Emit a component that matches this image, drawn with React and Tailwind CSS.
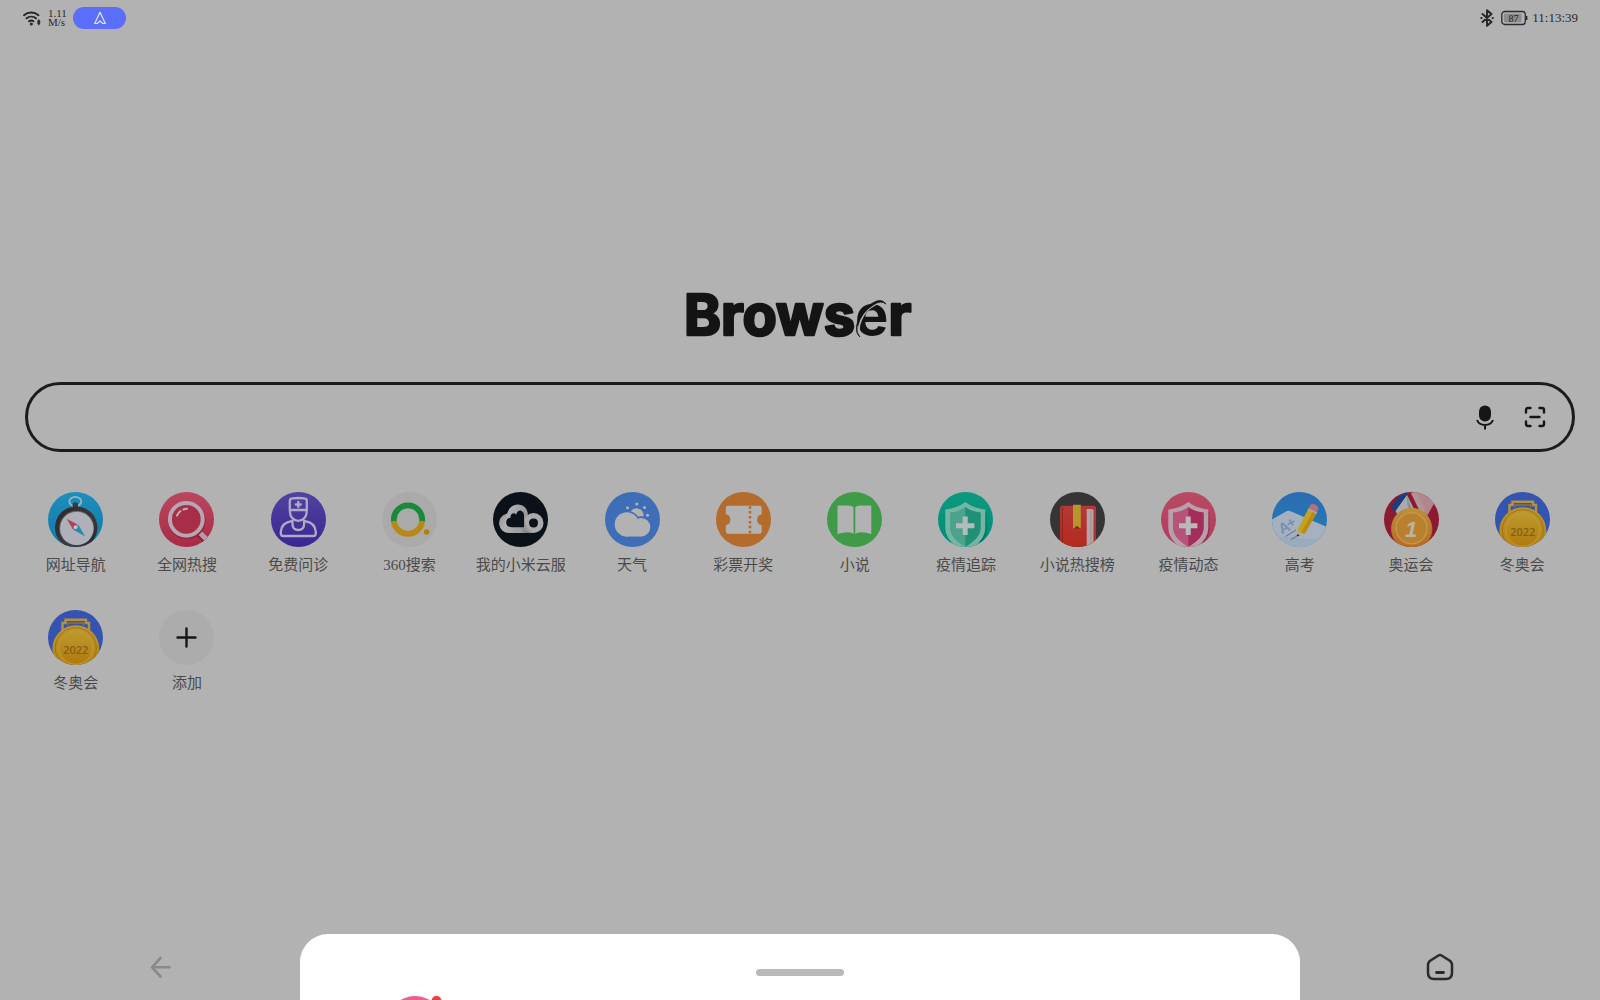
import { useState } from 'react';

const CompassIcon = () => (
  <>
    <defs>
      <linearGradient id="compassBg" x1="0" y1="0" x2="0" y2="1">
        <stop offset="0" stopColor="#1c8fbd" />
        <stop offset="1" stopColor="#1278a8" />
      </linearGradient>
      <linearGradient id="compassRim" x1="0" y1="0" x2="1" y2="1">
        <stop offset="0" stopColor="#2b2829" />
        <stop offset="0.6" stopColor="#3d393a" />
        <stop offset="1" stopColor="#242223" />
      </linearGradient>
    </defs>
    <rect width="55" height="55" fill="url(#compassBg)" />
    <ellipse cx="27.3" cy="9.5" rx="6" ry="4.6" fill="none" stroke="#92b4c4" strokeWidth="1.8" />
    <rect x="24.6" y="10.5" width="5.4" height="5" rx="1.5" fill="#3b3837" />
    <circle cx="28.2" cy="35.6" r="21.2" fill="url(#compassRim)" />
    <circle cx="28.6" cy="36.2" r="17.4" fill="#626063" />
    <circle cx="28.8" cy="36.4" r="16.7" fill="#aeb1ba" />
    <path d="M18.7 26.7 29.6 32.6 25 37.6Z" fill="#b63f55" />
    <path d="M37.2 44.5 30.4 32.8 25.2 37.8Z" fill="#2b8bae" />
    <circle cx="27.6" cy="35.2" r="1.9" fill="#c3c4ca" />
  </>
);

const SearchIcon = () => (
  <>
    <defs>
      <linearGradient id="searchBg" x1="0" y1="0" x2="0" y2="1">
        <stop offset="0" stopColor="#b9475f" />
        <stop offset="1" stopColor="#ab2a45" />
      </linearGradient>
    </defs>
    <rect width="55" height="55" fill="url(#searchBg)" />
    <path d="m38.5 40.5 9 8.5" stroke="#8f243b" strokeWidth="7" />
    <path d="m39.5 39.5 9 8.8" stroke="#b59da9" strokeWidth="5" />
    <circle cx="27.8" cy="28.4" r="17" fill="none" stroke="#94263d" strokeWidth="3.6" />
    <circle cx="27.3" cy="27.3" r="16.4" fill="#a82e47" stroke="#b7a5b2" strokeWidth="4" />
    <path d="M18 23.5q1.500-3 3.500-4.500M24.500 17.500q2-.8 3.500-.7" fill="none" stroke="#bdb1b9" strokeWidth="2" strokeLinecap="round" />
  </>
);

const DoctorIcon = () => (
  <>
    <defs>
      <linearGradient id="doctorBg" x1="0" y1="0" x2="0" y2="1">
        <stop offset="0" stopColor="#5143a0" />
        <stop offset="1" stopColor="#3c2593" />
      </linearGradient>
    </defs>
    <rect width="55" height="55" fill="url(#doctorBg)" />
    <g fill="none" stroke="#b0abc4" strokeWidth="2.300" strokeLinejoin="round" strokeLinecap="round">
      <path d="M18.800 18V9q0-2.400 2.500-2.600 6-.8 12 0 2.500.2 2.500 2.600v9Z" />
      <path d="M19 18v2.500a8.300 8.300 0 0 0 16.600 0V18" />
      <path d="M20.500 29.200C14 30.300 10 33.500 9.800 40v1.500q0 2.500 2.500 2.500h30q2.500 0 2.500-2.500V40c-.2-6.500-4.200-9.700-10.700-10.800" />
      <path d="M21.500 29v3q0 6 5.800 6t5.800-6v-3" />
      <path d="M27.300 10v5M24.800 12.500h5" />
    </g>
  </>
);

const So360Icon = () => (
  <>
    <rect width="55" height="55" fill="#aaaaab" />
    <path d="M11.900 29.300a14.200 14.200 0 1 1 28.200 0" fill="none" stroke="#1c883b" strokeWidth="5.800" />
    <path d="M40.100 29.300a14.200 14.200 0 0 1-28.200 0" fill="none" stroke="#b98917" strokeWidth="5.800" />
    <circle cx="44.600" cy="40" r="2.800" fill="#b27d14" />
  </>
);

const MiCloudIcon = () => (
  <>
    <defs>
      <linearGradient id="miCloud" x1="0" y1="0" x2="1" y2="0.3">
        <stop offset="0" stopColor="#8d8d90" />
        <stop offset="0.4" stopColor="#b0b0b2" />
        <stop offset="1" stopColor="#97979a" />
      </linearGradient>
      <linearGradient id="miFold" x1="0" y1="0" x2="1" y2="0">
        <stop offset="0" stopColor="#a4a4a6" />
        <stop offset="1" stopColor="#58585c" />
      </linearGradient>
    </defs>
    <rect width="55" height="55" fill="#0b1118" />
    <path d="M16 41A9.700 9.700 0 0 1 13 22q1.500-.5 2-2.500A10.200 10.200 0 0 1 34.800 21v20Z" fill="url(#miCloud)" />
    <path d="M26 41V35.500h5.500V31l10 10Z" fill="url(#miFold)" />
    <circle cx="40.500" cy="31" r="10" fill="#aaaaac" />
    <path d="M30.800 22q.2 10 4 14 2.500 3 6 5-7 .5-10-5Z" fill="#99999c" />
    <path d="M13.200 30.800q0-5 4.300-5-.3-3.300 2-4.300 2.300-.7 3.600 1.200 1.500-4.700 5-4 2.900.8 3 5.500v11H18.500q-5.300-.2-5.300-4.400Z" fill="#0b1118" />
    <path d="M36 31q0-4.500 4.600-4.500T45 31t-4.400 4.500T36 31Z" fill="#0b1118" />
  </>
);

const WeatherIcon = () => (
  <>
    <rect width="55" height="55" fill="#3f6eb8" />
    <path d="M25.500 19.500q3-4 7.500-3 5.500 1.600 5.500 7l-1 3H28Z" fill="#b2b2b2" />
    <g fill="#b2b2b2">
      <circle cx="22.500" cy="15.700" r="1.500" />
      <circle cx="31.800" cy="12" r="1.500" />
      <circle cx="39.500" cy="15.500" r="1.500" />
      <circle cx="42.500" cy="23.300" r="1.500" />
    </g>
    <g fill="#3f6eb8">
      <circle cx="21.800" cy="32.400" r="13.700" />
      <circle cx="36" cy="35.200" r="11" />
    </g>
    <g fill="#b2b2b2">
      <circle cx="21.800" cy="32.400" r="12.100" />
      <circle cx="36" cy="35.200" r="9.300" />
      <rect x="20" y="34" width="16" height="10.500" />
    </g>
  </>
);

const TicketIcon = () => (
  <>
    <rect width="55" height="55" fill="#b46c2d" />
    <path d="M12 13.800h31.500q2.200 0 2.200 2.200v6.300a5.600 5.600 0 0 0 0 11v6.300q0 2.200-2.200 2.200H12q-2.200 0-2.200-2.200v-6.300a5.600 5.600 0 0 0 0-11V16q0-2.200 2.200-2.200Z" fill="#b2b2b2" />
    <path d="M34 14.200v27.500" stroke="#b46c2d" strokeWidth="2.600" strokeDasharray="2.500 2.400" />
  </>
);

const BookIcon = () => (
  <>
    <rect width="55" height="55" fill="#3f9b47" />
    <path d="M10.500 14.300q0-.8 1-.8h10q3.500.2 5 1.800V42q-2.500-2-6-1.700-5 .3-10 1.700ZM44.300 14.300q0-.8-1-.8h-10q-3.500.2-5 1.800V42q2.500-2 6-1.700 5 .3 10 1.700Z" fill="#b2b2b2" />
  </>
);

const ShieldIcon = ({ id, from, to, rim, light, dark }) => (
  <>
    <defs>
      <linearGradient id={id} x1="0" y1="0" x2="0" y2="1">
        <stop offset="0" stopColor={from} />
        <stop offset="1" stopColor={to} />
      </linearGradient>
    </defs>
    <rect width="55" height="55" fill={`url(#${id})`} />
    <path d="M29 12q8 6.500 19.500 8v17q0 12-12 19.500h-15Z" fill="#000000" opacity="0.180" />
    <path d="M27.300 10q8 6.300 20 7.500V36q0 14-20 24-20-10-20-24V17.500q12-1.200 20-7.500Z" fill={rim} />
    <path d="M27.300 15q6 4.500 15.300 5.500V36q0 10-15.300 18.800Q12 46 12 36V20.500Q21.300 19.500 27.300 15Z" fill={light} />
    <path d="M27.300 15q6 4.500 15.300 5.500V36q0 10-15.300 18.800Z" fill={dark} />
    <path d="M27.200 24.500v18.400M18 33.700h18.400" stroke="#b6bab9" strokeWidth="5" />
  </>
);

const RedBookIcon = () => (
  <>
    <defs>
      <linearGradient id="redBook" x1="0" y1="0" x2="0" y2="1">
        <stop offset="0" stopColor="#b33a38" />
        <stop offset="1" stopColor="#b5291f" />
      </linearGradient>
    </defs>
    <rect width="55" height="55" fill="#353535" />
    <path d="M10 55V16q0-2.200 2.500-2.200h31q2.500 0 2.500 2.500V55Z" fill="url(#redBook)" />
    <path d="M36.700 17H42q1.500 0 1.500 1.500V55h-6.800Z" fill="#b4a5a4" />
    <path d="M41 17.500V55" stroke="#9c8f8f" strokeWidth="0.800" />
    <path d="M12.300 15v40" stroke="#8d2622" strokeWidth="1" />
    <path d="M23 12.800h7.800v24l-3.900-3-3.900 3Z" fill="#b8952c" />
    <path d="m24.500 36.500 2.400-2 2.600 2Z" fill="#7a2119" />
  </>
);

const ExamIcon = () => (
  <>
    <defs>
      <linearGradient id="examBg" x1="0" y1="0" x2="0" y2="1">
        <stop offset="0" stopColor="#2c6db0" />
        <stop offset="1" stopColor="#1f7cb8" />
      </linearGradient>
    </defs>
    <rect width="55" height="55" fill="url(#examBg)" />
    <path d="M0 27.500 14.500 19.300q1.700-.8 3.500-.2L55 35v20H0Z" fill="#a6b1bf" />
    <path d="M0 46q14-3 28 0t27-1v10H0Z" fill="#9aabbf" />
    <g transform="rotate(-27 14 38)">
      <text x="8" y="40" fontFamily="Liberation Sans, sans-serif" fontSize="15" fontWeight="700" fill="#7590b5">A</text>
    </g>
    <path d="M15.500 32.500 22.500 29M17.500 27.500l3.500 6" stroke="#7590b5" strokeWidth="1.800" />
    <path d="M13.500 44.500 24 38M19 47.500l6.500-4" stroke="#6f7f92" strokeWidth="1.200" />
    <path d="m25 44 .7-6.500 6.600 4Z" fill="#b9a486" />
    <path d="M25 44.500v-2.300l2.700 1.300Z" fill="#222222" />
    <path d="M25.500 37.500 36.500 16.500l8.300 4.500-12.300 21q-3.500-.5-7-4.500Z" fill="#c4a41e" />
    <path d="m29.500 40 11.500-20.800 3.800 1.900-12.300 20.900Z" fill="#b98a14" />
    <path d="m36.500 16.500 2-3.500q1.700-2.300 5-.6 3 2 2.800 4.800l-1.500 3.700Z" fill="#b3707f" />
    <path d="m36.300 16.800 8.400 4.400" stroke="#a9a9b3" strokeWidth="1.500" />
  </>
);

const OlympicIcon = () => (
  <>
    <defs>
      <linearGradient id="olympicMedal" x1="0" y1="0" x2="0" y2="1">
        <stop offset="0" stopColor="#bd8f38" />
        <stop offset="1" stopColor="#b96a25" />
      </linearGradient>
    </defs>
    <rect width="55" height="55" fill="#8c1a30" />
    <path d="M7 15 14 5l8-5 2 2-11 20Z" fill="#1c3c7c" />
    <path d="M23 3 11.500 19l3 6 18-3Z" fill="#a6abb2" />
    <path d="M23 3q2 10 7 16l2.500 3-4 1Q22 15 23 3Z" fill="#888d98" />
    <path d="m27 1 8-2 16 11-8 14-6-4Z" fill="#b2868c" />
    <path d="m27 1 5-1 9 17-2 6-3-3Z" fill="#af9498" />
    <circle cx="27.700" cy="37" r="20.700" fill="#a8701f" />
    <circle cx="27.500" cy="35.800" r="20" fill="url(#olympicMedal)" />
    <circle cx="27.500" cy="36.200" r="15.500" fill="#b9812f" stroke="#c2984a" strokeWidth="1.400" />
    <text x="27" y="44.500" textAnchor="middle" fontFamily="Liberation Sans, sans-serif" fontSize="22" fontStyle="italic" fontWeight="700" fill="#beb2a0">1</text>
  </>
);

const WinterIcon = () => (
  <>
    <defs>
      <linearGradient id="winterMedal" x1="0" y1="0" x2="0" y2="1">
        <stop offset="0" stopColor="#bb9530" />
        <stop offset="1" stopColor="#b5810e" />
      </linearGradient>
      <linearGradient id="winterFace" x1="0" y1="0" x2="0" y2="1">
        <stop offset="0" stopColor="#bd9a2c" />
        <stop offset="1" stopColor="#b07a10" />
      </linearGradient>
    </defs>
    <rect width="55" height="55" fill="#3553b0" />
    <path d="M14.500 21V13h3V9.800h20.500V13h3v8" fill="none" stroke="#b3913e" strokeWidth="2.500" />
    <path d="M20 15.500V13h15.500v2.500" fill="none" stroke="#8f742f" strokeWidth="1.500" />
    <circle cx="27.800" cy="38.800" r="23.500" fill="url(#winterMedal)" />
    <circle cx="27.800" cy="38.200" r="20.500" fill="none" stroke="#a1750f" strokeWidth="1" />
    <circle cx="27.800" cy="37.500" r="16.800" fill="url(#winterFace)" stroke="#c29c35" strokeWidth="1" />
    <text x="27.800" y="43.600" textAnchor="middle" fontFamily="Open Sans, sans-serif" fontSize="11" fontWeight="600" fill="#865f12">2022</text>
  </>
);

const PlusIcon = () => (
  <>
    <rect width="55" height="55" fill="#acacac" />
    <path d="M27.500 18.500v18M18.500 27.500h18" stroke="#161616" strokeWidth="2.400" strokeLinecap="round" />
  </>
);

const GreenShield = () => (
  <ShieldIcon id="shieldGreen" from="#0b9a80" to="#008c78" rim="#75b5a4" light="#4ba28d" dark="#219078" />
);

const PinkShield = () => (
  <ShieldIcon id="shieldPink" from="#b94a63" to="#b33a5c" rim="#b6a0ac" light="#b65378" dark="#a62c5c" />
);

const shortcuts = [
  { name: '网址导航', icon: CompassIcon },
  { name: '全网热搜', icon: SearchIcon },
  { name: '免费问诊', icon: DoctorIcon },
  { name: '360搜索', icon: So360Icon },
  { name: '我的小米云服', icon: MiCloudIcon },
  { name: '天气', icon: WeatherIcon },
  { name: '彩票开奖', icon: TicketIcon },
  { name: '小说', icon: BookIcon },
  { name: '疫情追踪', icon: GreenShield },
  { name: '小说热搜榜', icon: RedBookIcon },
  { name: '疫情动态', icon: PinkShield },
  { name: '高考', icon: ExamIcon },
  { name: '奥运会', icon: OlympicIcon },
  { name: '冬奥会', icon: WinterIcon },
  { name: '冬奥会', icon: WinterIcon },
];

const tileClass = 'flex w-full flex-col items-center gap-2 whitespace-nowrap text-[15px] leading-5 text-[#4a4a4a]';

const TileArt = ({ icon: Icon }) => (
  <svg viewBox="0 0 55 55" className="size-[55px] rounded-full" aria-hidden="true">
    <Icon />
  </svg>
);

const StatusBar = () => (
  <header className="flex h-9 items-center justify-between px-[22px] text-[#2a2a2a]">
    <div className="flex items-center">
      <svg viewBox="0 0 20 16" className="h-4 w-5" fill="none" stroke="#262626" strokeWidth="1.900" strokeLinecap="round" aria-hidden="true">
        <path d="M2 5.200a11 11 0 0 1 14.500 0M4.500 8.300a7.500 7.500 0 0 1 9.500 0M7 11.200a4 4 0 0 1 4.500 0" />
        <circle cx="9.300" cy="14" r="0.600" fill="#262626" />
        <path d="M16.800 10v4.500M15.800 11.500l1-1.500 1 1.500M15.800 13l1 1.500 1-1.500" strokeWidth="1.200" />
      </svg>
      <div className="ml-1.5 w-5 text-[11px] leading-[9px]">
        <div>1.11</div>
        <div>M/s</div>
      </div>
      <div className="ml-[5px] flex h-[22px] w-[53px] items-center justify-center rounded-full bg-[#5b6dfb]">
        <svg viewBox="0 0 14 14" className="size-3.5" fill="none" stroke="#e6e9ff" strokeWidth="1.200" strokeLinejoin="round" aria-hidden="true">
          <path d="M7 1.200 12.300 12.500 9.800 12.500 7 10 4.200 12.500 1.700 12.500Z" />
        </svg>
      </div>
    </div>
    <div className="flex items-center">
      <svg viewBox="0 0 14 18" className="h-[18px] w-3.5" fill="none" stroke="#262626" strokeWidth="1.900" strokeLinejoin="round" strokeLinecap="round" aria-hidden="true">
        <path d="m2.500 5 9 8L7 16.800V1.200L11.500 5l-9 8" />
        <path d="M1.200 9h.4M12.600 9h.3" />
      </svg>
      <svg viewBox="0 0 28 16" className="ml-1.5 h-4 w-7" aria-label="Battery 87%" role="img">
        <rect x="1.800" y="1.500" width="23.500" height="13" rx="3" fill="none" stroke="#2c2c2c" strokeWidth="1.300" />
        <rect x="4" y="3.700" width="17.500" height="8.600" rx="1" fill="#8c8c8c" />
        <path d="M26.600 6v4" stroke="#2c2c2c" strokeWidth="1.600" />
        <text x="13.500" y="11.500" textAnchor="middle" fontFamily="Liberation Serif, serif" fontSize="10" fill="#1f1f1f">87</text>
      </svg>
      <time className="ml-1 text-[13px] leading-4">11:13:39</time>
    </div>
  </header>
);

const Logo = () => (
  <svg viewBox="0 0 232 50" className="h-[50px] w-[232px] overflow-visible" role="img" aria-label="Browser">
    <text
      x="0"
      y="47"
      fontFamily="Inter, sans-serif"
      fontSize="56"
      fontWeight="700"
      fill="#141414"
      stroke="#141414"
      strokeWidth="2.500"
      strokeLinejoin="round"
    >
      Brows
      <tspan strokeWidth="0">e</tspan>
      r
    </text>
    <path d="M178 48c-8-8 2-25 11-30q9-6 13-2" fill="none" stroke="#b2b2b2" strokeWidth="1.800" />
    <path d="M176 49c-9-8 1-27 11-33q10-7 15 0-5-4-12 .5-13 8-17 22-1.500 6 3 10.500Z" fill="#141414" stroke="#141414" strokeWidth="0.800" />
  </svg>
);

const App = () => {
  const [query, setQuery] = useState('');

  return (
    <div className="relative flex min-h-screen flex-col overflow-hidden bg-[#b2b2b2] font-['Liberation_Serif','Noto_Sans_CJK_SC',serif]">
      <StatusBar />

      <main className="flex flex-1 flex-col pt-[252px]">
        <h1 className="flex justify-center">
          <Logo />
        </h1>

        <form
          onSubmit={(e) => e.preventDefault()}
          className="mx-[25px] mt-11 flex h-[70px] items-center gap-[26px] rounded-full border-[3px] border-[#1c1c1c] pr-[25px] pl-8"
        >
          <input
            type="search"
            aria-label="搜索"
            value={query}
            onChange={(e) => setQuery(e.target.value)}
            className="h-full min-w-0 flex-1 bg-transparent text-lg outline-none"
          />
          <button type="button" aria-label="语音搜索">
            <svg viewBox="0 0 24 26" className="h-[26px] w-6" aria-hidden="true">
              <rect x="6" y="1.500" width="12" height="16" rx="6" fill="#161616" />
              <path d="M4 16q2 5 8 5t8-5M12 21v4.500" fill="none" stroke="#161616" strokeWidth="2" />
            </svg>
          </button>
          <button type="button" aria-label="扫一扫">
            <svg viewBox="0 0 24 24" className="size-6" fill="none" stroke="#161616" strokeWidth="2.400" strokeLinecap="round" aria-hidden="true">
              <path d="M3 7.500V5q0-2 2-2h2.500M16.500 3H19q2 0 2 2v2.500M21 16.500V19q0 2-2 2h-2.500M7.500 21H5q-2 0-2-2v-2.500M7.500 12h9" />
            </svg>
          </button>
        </form>

        <nav className="mt-10 grid grid-cols-14 gap-y-[35px] pr-[22px] pl-5">
          {shortcuts.map((item, i) => (
            <a key={i} href="#" className={tileClass}>
              <TileArt icon={item.icon} />
              <span>{item.name}</span>
            </a>
          ))}
          <button type="button" className={tileClass}>
            <TileArt icon={PlusIcon} />
            <span>添加</span>
          </button>
        </nav>
      </main>

      <footer className="grid h-[66px] grid-cols-5 items-center justify-items-center">
        <button type="button" aria-label="后退">
          <svg viewBox="0 0 24 24" className="size-6" fill="none" stroke="#8a8a8a" strokeWidth="2.600" strokeLinecap="round" strokeLinejoin="round" aria-hidden="true">
            <path d="M21.500 12.300H4M12.500 3 4 12.300l8.500 9.200" />
          </svg>
        </button>
        <button type="button" aria-label="主页" className="col-start-5">
          <svg viewBox="0 0 28 28" className="size-7" fill="none" stroke="#2a2a2a" strokeWidth="2.500" strokeLinecap="round" strokeLinejoin="round" aria-hidden="true">
            <path d="M12.500 2.500q1.500-.9 3 0l8 5q2.500 1.700 2.500 4.500v8q0 6-6 6H8q-6 0-6-6v-8q0-2.800 2.500-4.500Z" />
            <path d="M10.500 19.500h7" strokeWidth="2.800" />
          </svg>
        </button>
      </footer>

      <section className="absolute bottom-0 left-1/2 h-[66px] w-5/8 -translate-x-1/2 overflow-hidden rounded-t-[28px] bg-white">
        <div className="mx-auto mt-[35px] h-[7px] w-[88px] rounded-full bg-[#b9b9b9]" />
        <div className="mt-5 ml-[87px]">
          <svg viewBox="0 0 56 56" className="size-14 overflow-visible" aria-hidden="true">
            <circle cx="28" cy="28" r="28" fill="#ec5d90" />
            <circle cx="49.500" cy="5" r="5" fill="#ef3b3b" />
          </svg>
        </div>
      </section>
    </div>
  );
};

export default App;
